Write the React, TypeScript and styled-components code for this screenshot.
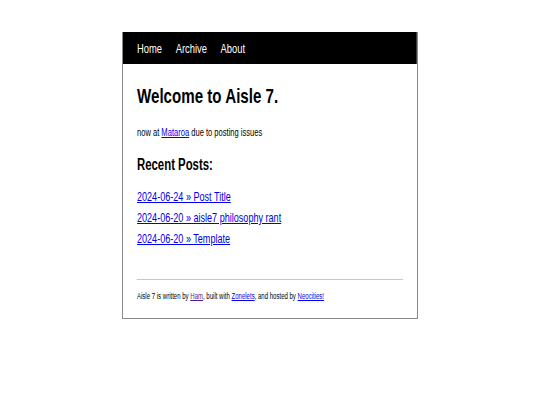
import React from 'react';
import styled, { createGlobalStyle } from 'styled-components';

const GlobalStyle = createGlobalStyle`
  html, body {
    margin: 0;
    padding: 0;
    background: #ffffff;
  }
  body {
    font-family: "Liberation Sans", Arial, Helvetica, sans-serif;
    color: #000000;
  }
`;

// the page is drawn in a narrow (condensed) sans; we squeeze the column horizontally
const SQUEEZE = 0.72;

const posts = [
  { date: '2024-06-24', title: 'Post Title' },
  { date: '2024-06-20', title: 'aisle7 philosophy rant' },
  { date: '2024-06-20', title: 'Template' },
];

export default function App(): JSX.Element {
  return <Page>
    <GlobalStyle />
    <Container>
      <Squeezed>
        <NavBar>
          <NavLink>Home</NavLink>
          <NavLink>Archive</NavLink>
          <NavLink>About</NavLink>
        </NavBar>
        <Main>
          <Title>Welcome to Aisle 7.</Title>
          <Intro>now at <Link href="#">Mataroa</Link> due to posting issues</Intro>
          <SectionTitle>Recent Posts:</SectionTitle>
          <PostList>
            { posts.map((post, i) =>
              <PostItem key={ i }><Link href="#">{ `${post.date} » ${post.title}` }</Link></PostItem>
            ) }
          </PostList>
          <Footer>
            Aisle 7 is written by <Link href="#" $visited>Ham</Link>, built with <Link href="#">Zonelets</Link>, and hosted by <Link href="#">Neocities!</Link>
          </Footer>
        </Main>
      </Squeezed>
    </Container>
  </Page>;
}

const Page = styled.div`
  padding-top: 32px;
  display: flex;
  justify-content: center;
`;

const Container = styled.div`
  width: 296px;
  border: 1px solid #8a8a8a;
  border-top: none;
  box-sizing: border-box;
  background: #fff;
  overflow: hidden;
`;

const Squeezed = styled.div`
  width: ${ 294 / SQUEEZE }px;
  transform: scaleX(${ SQUEEZE });
  transform-origin: left top;
`;

const NavBar = styled.nav`
  height: 32px;
  background: #000;
  display: flex;
  align-items: center;
  gap: 19px;
  padding: 0 ${ 14 / SQUEEZE }px;
`;

const NavLink = styled.span`
  color: #fff;
  font-size: 13px;
`;

const Main = styled.main`
  padding: 20px ${ 14 / SQUEEZE }px 17px;
`;

const Title = styled.h1`
  font-size: 21px;
  line-height: 24px;
  font-weight: bold;
  margin: 0 0 18px;
`;

const Intro = styled.p`
  font-size: 10.5px;
  line-height: 12px;
  margin: 0 0 18px;
`;

const Link = styled.a<{ $visited?: boolean }>`
  color: ${ p => p.$visited ? '#551a8b' : '#0000ee' };
  text-decoration: underline;
`;

const SectionTitle = styled.h2`
  font-size: 15.8px;
  line-height: 18px;
  font-weight: bold;
  margin: 0 0 13px;
`;

const PostList = styled.ul`
  list-style: none;
  padding: 0;
  margin: 0 0 29px;
  font-size: 12.6px;
  line-height: 21px;
`;

const PostItem = styled.li`
  margin: 0;
`;

const Footer = styled.footer`
  border-top: 1px solid #c8c8c8;
  padding-top: 11px;
  font-size: 8.4px;
  line-height: 10px;
`;
